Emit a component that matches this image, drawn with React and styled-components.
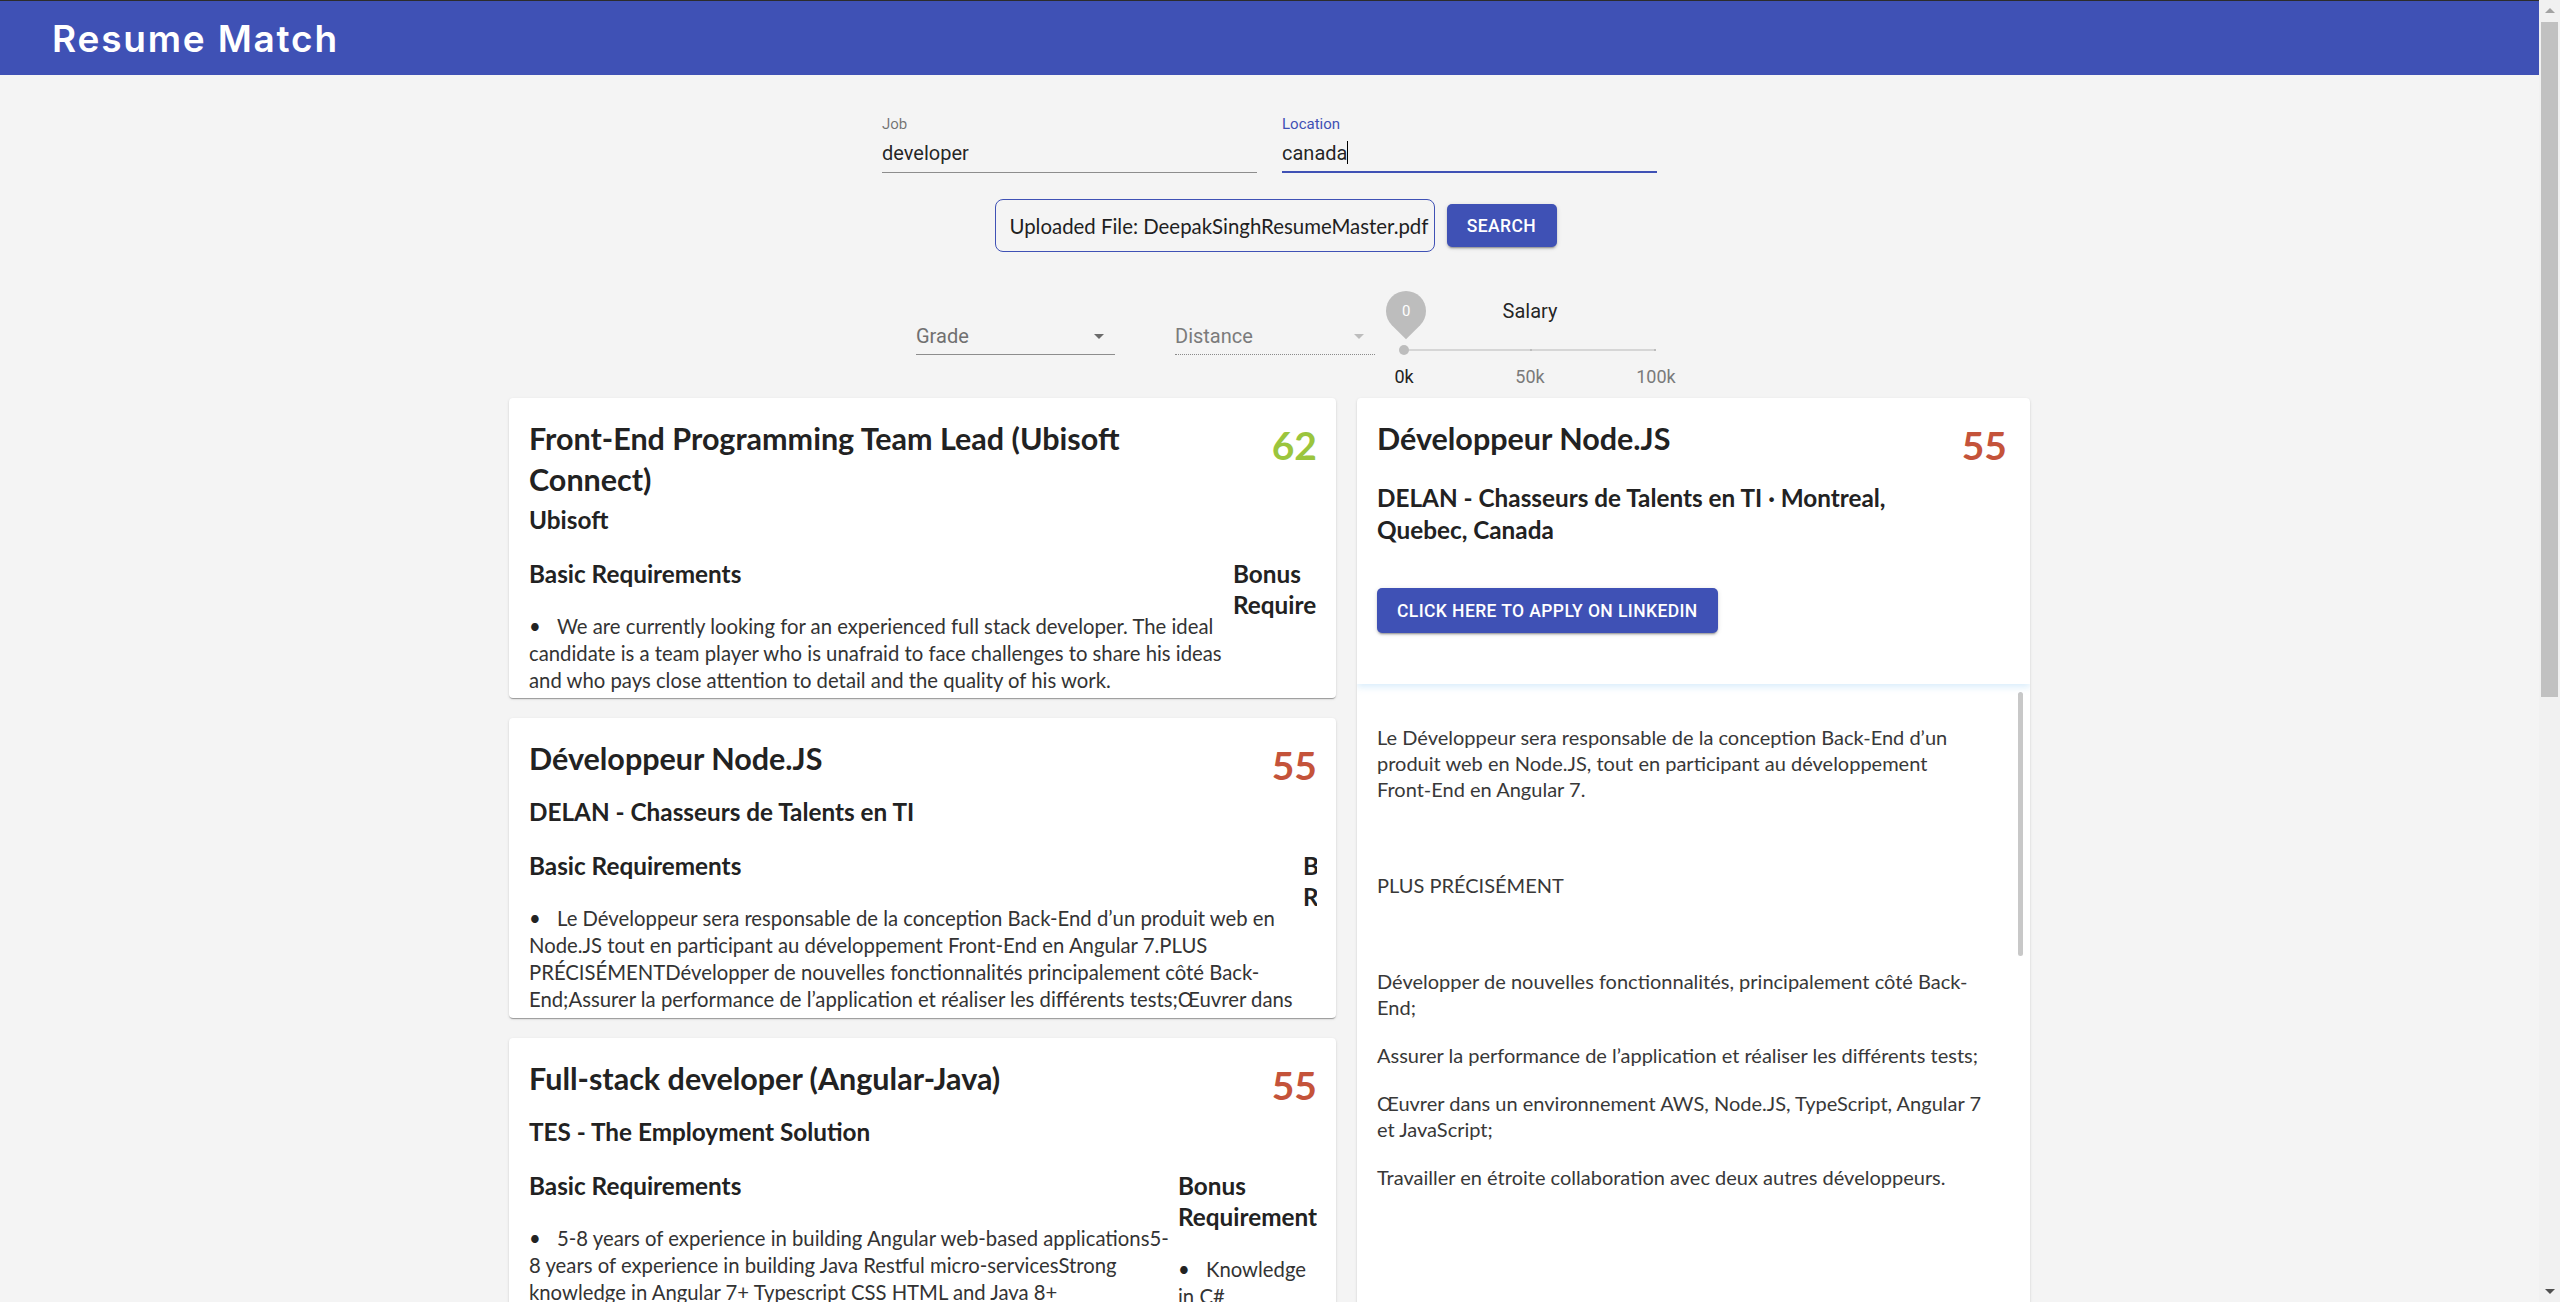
import React from "react";
import styled, { createGlobalStyle } from "styled-components";

const GlobalStyle = createGlobalStyle`
  html, body { margin: 0; padding: 0; }
  body {
    background: #f4f4f4;
    font-family: Roboto, "Noto Sans", sans-serif;
    color: rgba(0, 0, 0, 0.87);
  }
`;

const Shell = styled.div`
  margin-right: 21px;
`;

const PageScrollbar = styled.div`
  position: fixed;
  top: 0;
  right: 0;
  bottom: 0;
  width: 21px;
  background: #f1f1f1;
  display: flex;
  flex-direction: column;
  align-items: center;
  z-index: 10;
`;

const ScrollArrow = styled.span`
  flex: 0 0 21px;
  display: flex;
  align-items: center;
  justify-content: center;
  &::after {
    content: "";
    width: 0;
    height: 0;
    border-left: 5px solid transparent;
    border-right: 5px solid transparent;
    ${(p) =>
      p.$up
        ? "border-bottom: 5px solid #a3a3a3;"
        : "border-top: 5px solid #505050;"}
  }
`;

const ScrollTrack = styled.div`
  flex: 1;
  align-self: stretch;
  padding: 1px 2px 0;
`;

const ScrollThumbPage = styled.div`
  height: 675px;
  background: #c1c1c1;
`;

const Header = styled.header`
  height: 74px;
  border-top: 1px solid #2c2c2c;
  background: #3f51b5;
  display: flex;
  align-items: center;
  padding-left: 52px;
`;

const Brand = styled.h1`
  margin: 0;
  font-family: Inter, "Open Sans", sans-serif;
  font-weight: 600;
  font-size: 37px;
  letter-spacing: 1.8px;
  color: #ffffff;
`;

const SearchForm = styled.section`
  display: flex;
  flex-direction: column;
  align-items: center;
  padding-top: 40px;
`;

const FieldsRow = styled.div`
  display: flex;
  gap: 25px;
`;

const Field = styled.label`
  display: flex;
  flex-direction: column;
  width: 375px;
`;

const FieldLabel = styled.span`
  font-size: 15px;
  line-height: 18px;
  color: ${(p) => (p.$focused ? "#3f51b5" : "rgba(0,0,0,0.54)")};
`;

const FieldValue = styled.div`
  margin-top: 6px;
  font-size: 20px;
  line-height: 28px;
  color: rgba(0, 0, 0, 0.87);
  padding-bottom: ${(p) => (p.$focused ? "4px" : "5px")};
  border-bottom: ${(p) => (p.$focused ? "2px solid #3f51b5" : "1px solid #8d8d8d")};
`;

const Caret = styled.span`
  display: inline-block;
  width: 1px;
  height: 23px;
  background: #000;
  vertical-align: -4px;
`;

const UploadRow = styled.div`
  display: flex;
  align-items: center;
  gap: 12px;
  margin-top: 26px;
  margin-left: 12px;
`;

const UploadBox = styled.div`
  box-sizing: border-box;
  width: 440px;
  height: 53px;
  border: 1px solid #3f51b5;
  border-radius: 8px;
  display: flex;
  align-items: center;
  padding: 0 14px;
  font-family: Lato, "Noto Sans", sans-serif;
  font-size: 20.4px;
  color: #1f1f1f;
  white-space: nowrap;
`;

const PrimaryButton = styled.button`
  box-sizing: border-box;
  height: ${(p) => p.$h || 43}px;
  min-width: ${(p) => p.$minW || 0}px;
  padding: 0 ${(p) => p.$px}px;
  border: none;
  border-radius: 5px;
  background: #3f51b5;
  color: #fff;
  font-family: Roboto, sans-serif;
  font-weight: 500;
  font-size: 17.5px;
  letter-spacing: 0.4px;
  text-transform: uppercase;
  box-shadow: 0 3px 1px -2px rgba(0,0,0,0.2), 0 2px 2px 0 rgba(0,0,0,0.14), 0 1px 5px 0 rgba(0,0,0,0.12);
  cursor: pointer;
`;

const FilterRow = styled.div`
  box-sizing: border-box;
  width: 775px;
  padding-left: 34px;
  margin-top: 37px;
  display: flex;
  align-items: flex-start;
`;

const Select = styled.div`
  width: ${(p) => p.$w}px;
  margin-top: 32px;
  margin-left: ${(p) => p.$ml || 0}px;
  height: 30px;
  padding-bottom: 3px;
  padding-right: 11px;
  display: flex;
  align-items: center;
  justify-content: space-between;
  font-size: 20px;
  line-height: 30px;
  color: ${(p) => (p.$disabled ? "#7b7b7b" : "#707070")};
  border-bottom: 1px ${(p) => (p.$disabled ? "dotted #8a8a8a" : "solid #8d8d8d")};
`;

const Arrow = styled.span`
  width: 0;
  height: 0;
  border-left: 5px solid transparent;
  border-right: 5px solid transparent;
  border-top: 5px solid ${(p) => (p.$disabled ? "#bdbdbd" : "#6b6b6b")};
`;

const SliderBox = styled.div`
  width: 252px;
  margin-left: 29px;
  display: flex;
  flex-direction: column;
`;

const SliderTitle = styled.div`
  height: 44px;
  line-height: 44px;
  text-align: center;
  font-size: 20px;
  color: rgba(0, 0, 0, 0.87);
`;

const RailWrap = styled.div`
  position: relative;
  height: 34px;
  padding-top: 16px;
  box-sizing: border-box;
`;

const Rail = styled.div`
  height: 2px;
  background: #d6d6d6;
`;

const Tick = styled.span`
  position: absolute;
  top: 16px;
  width: 2px;
  height: 2px;
  background: #bdbdbd;
`;

const Thumb = styled.span`
  position: absolute;
  left: -5px;
  top: 12px;
  width: 10px;
  height: 10px;
  border-radius: 50%;
  background: #bdbdbd;
`;

const ValuePin = styled.span`
  position: absolute;
  left: -18px;
  top: -42px;
  width: 40px;
  height: 40px;
  border-radius: 50% 50% 50% 0;
  background: #bdbdbd;
  transform: rotate(-45deg);
  display: flex;
  align-items: center;
  justify-content: center;
`;

const PinText = styled.span`
  transform: rotate(45deg);
  color: #fff;
  font-size: 15px;
`;

const Marks = styled.div`
  position: relative;
  height: 20px;
`;

const MarkLabel = styled.span`
  position: absolute;
  top: 0;
  transform: translateX(-50%);
  font-size: 18px;
  line-height: 20px;
  color: ${(p) => (p.$active ? "#222" : "#7a7a7a")};
  white-space: nowrap;
`;

const Main = styled.main`
  display: flex;
  justify-content: center;
  align-items: flex-start;
  gap: 21px;
  margin-top: 11px;
  padding-bottom: 131px;
  font-family: Lato, "Noto Sans", sans-serif;
`;

const CardList = styled.div`
  width: 827px;
  display: flex;
  flex-direction: column;
  gap: 20px;
`;

const Card = styled.article`
  box-sizing: border-box;
  height: 300px;
  background: #fff;
  border-radius: 4px;
  padding: 20px 19px 0 20px;
  overflow: hidden;
  box-shadow: 0 2px 1px -1px rgba(0,0,0,0.2), 0 1px 1px 0 rgba(0,0,0,0.14), 0 1px 3px 0 rgba(0,0,0,0.12);
`;

const TitleRow = styled.div`
  display: flex;
  justify-content: space-between;
  align-items: flex-start;
  gap: 20px;
`;

const JobTitle = styled.h2`
  margin: 0;
  max-width: 660px;
  font-size: 30.5px;
  line-height: 41px;
  font-weight: 700;
  color: #222;
`;

const Score = styled.div`
  font-size: 39px;
  line-height: 54px;
  font-weight: 700;
  color: ${(p) => p.$color};
`;

const Company = styled.h3`
  margin: ${(p) => p.$mt || 4}px 0 0;
  max-width: ${(p) => p.$maxW || 780}px;
  font-size: 24.3px;
  line-height: 32px;
  font-weight: 700;
  color: #222;
`;

const ReqRow = styled.div`
  display: flex;
  gap: 6px;
  margin-top: 22px;
`;

const ReqCol = styled.div`
  flex: ${(p) => (p.$w ? `0 0 ${p.$w}px` : "1 1 0")};
  min-width: 0;
  overflow: hidden;
`;

const ReqTitle = styled.h4`
  margin: 0;
  font-size: 24.3px;
  line-height: 31px;
  font-weight: 700;
  color: #222;
`;

const BulletList = styled.ul`
  list-style: none;
  margin: 24px 0 0;
  padding: 0;
`;

const Bullet = styled.li`
  font-size: 20.3px;
  line-height: 27px;
  color: #333;
  &::before {
    content: "•";
    display: inline-block;
    width: 28px;
    color: #222;
  }
`;

const DetailPanel = styled.aside`
  width: 673px;
  height: 1000px;
  background: #fff;
  border-radius: 4px;
  display: flex;
  flex-direction: column;
  overflow: hidden;
  box-shadow: 0 2px 1px -1px rgba(0,0,0,0.2), 0 1px 1px 0 rgba(0,0,0,0.14), 0 1px 3px 0 rgba(0,0,0,0.12);
`;

const DetailHead = styled.div`
  box-sizing: border-box;
  flex: 0 0 286px;
  padding: 20px 23px 0 20px;
  position: relative;
  box-shadow: 0 3px 7px rgba(120, 190, 240, 0.28);
  z-index: 1;
`;

const ApplyRow = styled.div`
  margin-top: 42px;
`;

const DetailBodyFrame = styled.div`
  flex: 1;
  position: relative;
  overflow: hidden;
`;

const DetailBody = styled.div`
  padding: 18px 45px 0 20px;
  font-size: 20px;
  line-height: 26px;
  color: #383838;
`;

const PanelThumb = styled.span`
  position: absolute;
  top: 8px;
  right: 7px;
  width: 5px;
  height: 264px;
  border-radius: 3px;
  background: #c8c8c8;
`;

const Para = styled.p`
  margin: 22px 0;
`;

const cards = [
  {
    title: "Front-End Programming Team Lead (Ubisoft Connect)",
    score: 62,
    color: "#9bc53d",
    company: "Ubisoft",
    basicW: 698,
    basic: [
      "We are currently looking for an experienced full stack developer. The ideal candidate is a team player who is unafraid to face challenges to share his ideas and who pays close attention to detail and the quality of his work.",
      "You will be working closely with the Ubisoft Connect team to build features used by millions of players.",
    ],
    bonus: [],
  },
  {
    title: "Développeur Node.JS",
    score: 55,
    color: "#c4533a",
    company: "DELAN - Chasseurs de Talents en TI",
    basicW: 768,
    basic: [
      "Le Développeur sera responsable de la conception Back-End d’un produit web en Node.JS tout en participant au développement Front-End en Angular 7.PLUS PRÉCISÉMENTDévelopper de nouvelles fonctionnalités principalement côté Back-End;Assurer la performance de l’application et réaliser les différents tests;Œuvrer dans un environnement AWS, Node.JS, TypeScript, Angular 7 et JavaScript;Travailler en étroite collaboration avec deux autres développeurs.",
    ],
    bonus: [],
  },
  {
    title: "Full-stack developer (Angular-Java)",
    score: 55,
    color: "#c4533a",
    company: "TES - The Employment Solution",
    basicW: 643,
    basic: [
      "5-8 years of experience in building Angular web-based applications5-8 years of experience in building Java Restful micro-servicesStrong knowledge in Angular 7+ Typescript CSS HTML and Java 8+ Understanding of microservice architecture and relational databases",
    ],
    bonus: ["Knowledge in C#", "Experience with Docker"],
  },
  {
    title: "Full Stack Developer",
    score: 52,
    color: "#c4533a",
    company: "Coveo",
    basicW: 700,
    basic: [
      "3+ years of experience developing web applications with JavaScript, TypeScript and Node.js. Experience with React or Angular and REST APIs.",
    ],
    bonus: ["Cloud experience"],
  },
  {
    title: "Software Developer - Web",
    score: 50,
    color: "#c4533a",
    company: "Shopify",
    basicW: 700,
    basic: [
      "Build and maintain web features used by merchants around the world. Strong knowledge of JavaScript, HTML and CSS.",
    ],
    bonus: ["GraphQL"],
  },
  {
    title: "Développeur Web Full-Stack",
    score: 48,
    color: "#c4533a",
    company: "Desjardins",
    basicW: 700,
    basic: [
      "Concevoir et développer des applications web en Angular et Java. Participer aux revues de code et à l’amélioration continue.",
    ],
    bonus: ["Azure"],
  },
];

function JobCard({ job }) {
  return (
    <Card>
      <TitleRow>
        <JobTitle>{job.title}</JobTitle>
        <Score $color={job.color}>{job.score}</Score>
      </TitleRow>
      <Company>{job.company}</Company>
      <ReqRow>
        <ReqCol $w={job.basicW}>
          <ReqTitle>Basic Requirements</ReqTitle>
          <BulletList>
            {job.basic.map((b, i) => (
              <Bullet key={i}>{b}</Bullet>
            ))}
          </BulletList>
        </ReqCol>
        <ReqCol>
          <ReqTitle>Bonus Requirements</ReqTitle>
          <BulletList>
            {job.bonus.map((b, i) => (
              <Bullet key={i}>{b}</Bullet>
            ))}
          </BulletList>
        </ReqCol>
      </ReqRow>
    </Card>
  );
}

export default function App() {
  return (
    <>
      <GlobalStyle />
      <Shell>
        <Header>
          <Brand>Resume Match</Brand>
        </Header>
        <SearchForm>
          <FieldsRow>
            <Field>
              <FieldLabel>Job</FieldLabel>
              <FieldValue>developer</FieldValue>
            </Field>
            <Field>
              <FieldLabel $focused>Location</FieldLabel>
              <FieldValue $focused>
                canada<Caret />
              </FieldValue>
            </Field>
          </FieldsRow>
          <UploadRow>
            <UploadBox>Uploaded File: DeepakSinghResumeMaster.pdf</UploadBox>
            <PrimaryButton $h={43} $px={0} $minW={110}>Search</PrimaryButton>
          </UploadRow>
          <FilterRow>
            <Select $w={188}>
              Grade
              <Arrow />
            </Select>
            <Select $w={189} $ml={60} $disabled>
              Distance
              <Arrow $disabled />
            </Select>
            <SliderBox>
              <SliderTitle>Salary</SliderTitle>
              <RailWrap>
                <Rail />
                <Tick style={{ left: "50%" }} />
                <Tick style={{ left: "calc(100% - 2px)" }} />
                <ValuePin>
                  <PinText>0</PinText>
                </ValuePin>
                <Thumb />
              </RailWrap>
              <Marks>
                <MarkLabel $active style={{ left: "0%" }}>0k</MarkLabel>
                <MarkLabel style={{ left: "50%" }}>50k</MarkLabel>
                <MarkLabel style={{ left: "100%" }}>100k</MarkLabel>
              </Marks>
            </SliderBox>
          </FilterRow>
        </SearchForm>
        <Main>
          <CardList>
            {cards.map((job, i) => (
              <JobCard key={i} job={job} />
            ))}
          </CardList>
          <DetailPanel>
            <DetailHead>
              <TitleRow>
                <JobTitle>Développeur Node.JS</JobTitle>
                <Score $color="#c4533a">55</Score>
              </TitleRow>
              <Company $mt={10} $maxW={590}>
                DELAN - Chasseurs de Talents en TI · Montreal, Quebec, Canada
              </Company>
              <ApplyRow>
                <PrimaryButton $h={45} $px={20}>Click here to apply on LinkedIn</PrimaryButton>
              </ApplyRow>
            </DetailHead>
            <DetailBodyFrame>
              <DetailBody>
                <Para>
                  Le Développeur sera responsable de la conception Back-End d’un produit web en Node.JS, tout en participant au développement Front-End en Angular 7.
                </Para>
                <Para><br /></Para>
                <Para>PLUS PRÉCISÉMENT</Para>
                <Para><br /></Para>
                <Para>Développer de nouvelles fonctionnalités, principalement côté Back-End;</Para>
                <Para>Assurer la performance de l’application et réaliser les différents tests;</Para>
                <Para>Œuvrer dans un environnement AWS, Node.JS, TypeScript, Angular 7 et JavaScript;</Para>
                <Para>Travailler en étroite collaboration avec deux autres développeurs.</Para>
                <Para><br /></Para>
                <Para><br /></Para>
                <Para><br /></Para>
                <Para>PROFIL RECHERCHÉ</Para>
                <Para><br /></Para>
                <Para>Baccalauréat en informatique ou génie logiciel;</Para>
                <Para>Minimum de 3 ans d’expérience en développement Node.JS;</Para>
                <Para>Connaissance d’Angular et de TypeScript;</Para>
              </DetailBody>
              <PanelThumb />
            </DetailBodyFrame>
          </DetailPanel>
        </Main>
      </Shell>
      <PageScrollbar>
        <ScrollArrow $up />
        <ScrollTrack>
          <ScrollThumbPage />
        </ScrollTrack>
        <ScrollArrow />
      </PageScrollbar>
    </>
  );
}
